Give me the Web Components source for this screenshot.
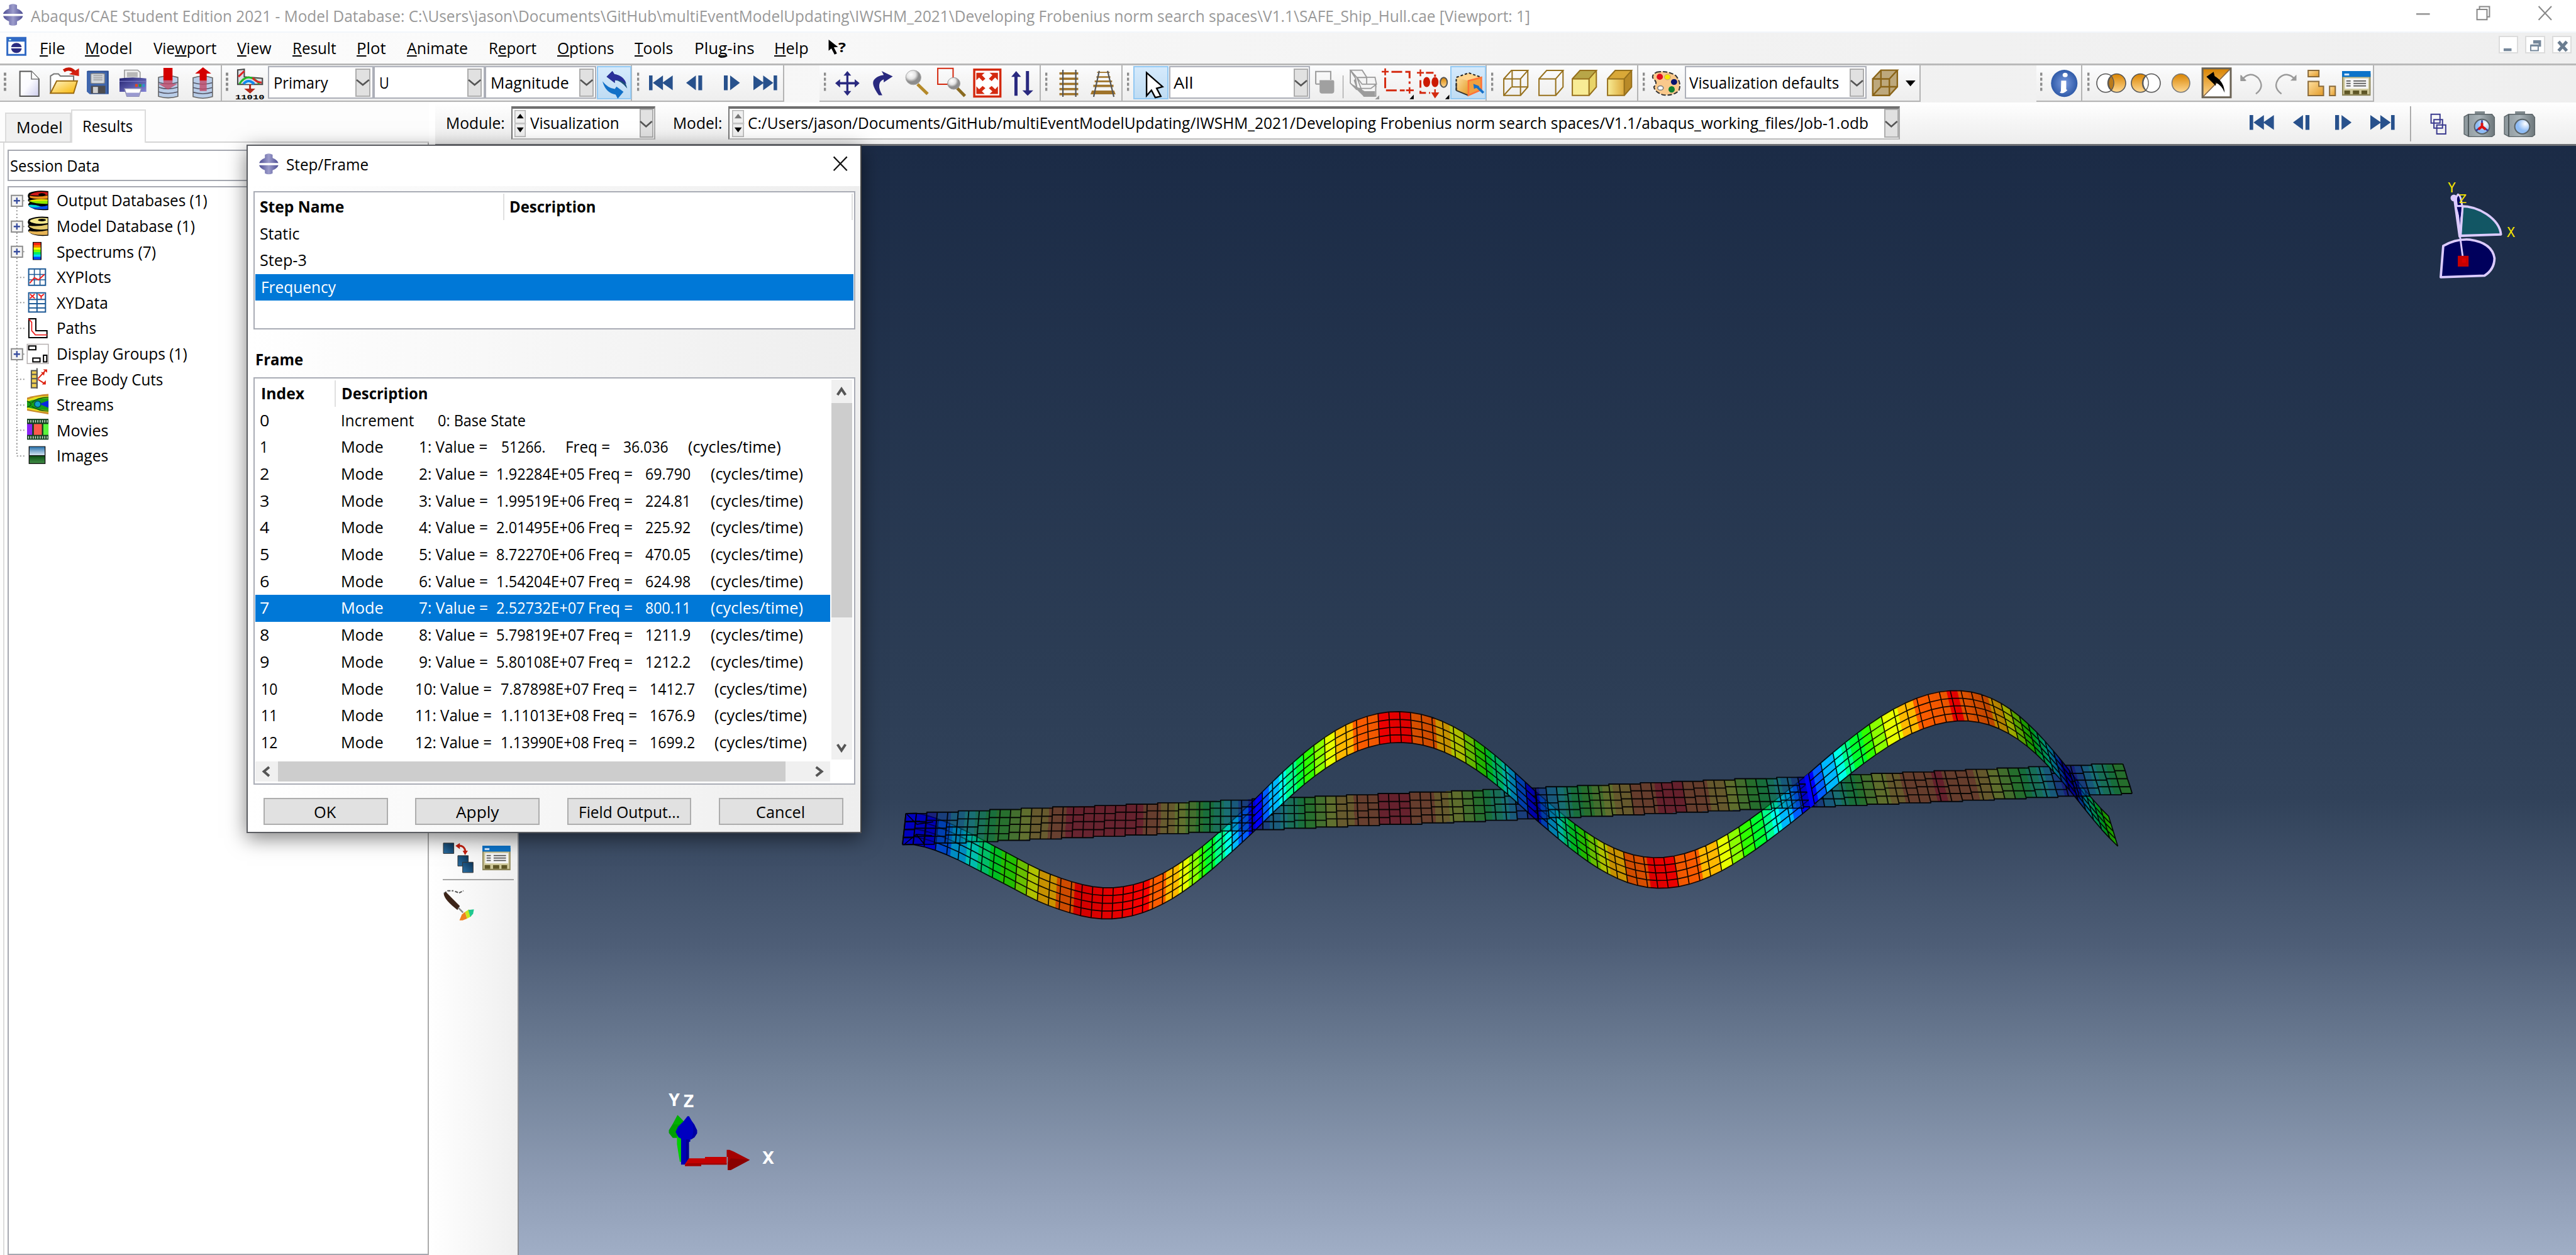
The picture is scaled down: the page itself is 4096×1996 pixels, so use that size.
<!DOCTYPE html>
<html lang="en">
<head>
<meta charset="utf-8">
<title>Abaqus/CAE Student Edition 2021</title>
<style>
html,body{margin:0;padding:0;width:4096px;height:1996px;overflow:hidden;background:#fff;font-family:"Open Sans","Noto Sans",sans-serif;color:#000}
</style>
</head>
<body>
<cae-app></cae-app>
<script>
/* Art grids: each icon is drawn in the grid of its own sheet; the sheet maps it to page pixels. */
const SHEET={
 1:{x:0,y:0,a:.656,b:.2226},2:{x:975.1,y:0,a:.5537,b:.2226},3:{x:1803.3,y:66.8,a:.5537,b:.2226},
 4:{x:2644.9,y:66.8,a:.3834,b:.2226},5:{x:3205.9,y:0,a:.5678,b:.2226},6:{x:0,y:240.4,a:.2641,b:.3322},
 7:{x:387.4,y:227.1,a:.6389,b:.3834},8:{x:387.4,y:801.5,a:.6389,b:.4345}};
const r2=n=>Math.round(n*100)/100;
const svg=(vb,w,h,body)=>`<svg width="${r2(w)}" height="${r2(h)}" viewBox="${vb}" preserveAspectRatio="none">${body}</svg>`;
function I(c,x0,y0,x1,y1,body){const k=SHEET[c];const w=(x1-x0)*k.a,h=(y1-y0)*k.b;
 return{x:k.x+x0*k.a,y:k.y+y0*k.b,w,h,html:svg(`${x0} ${y0} ${x1-x0} ${y1-y0}`,w,h,body)};}
function T(x0,x1,base,text,o={}){const s=o.s||25;
 return{x:x0-1,y:base-1.069*s,w:x1-x0+2,h:1.362*s,html:`<ui-text w="${r2(x1-x0+2)}" style="font-size:${s}px;${o.css||''}">${text}</ui-text>`};}
function TC(c,x0,x1,base,text,o){const k=SHEET[c];return T(k.x+x0*k.a,k.x+x1*k.a,k.y+base*k.b,text,o);}
function row(items,ox,oy){let p=ox;return`<div class="row">`+items.slice().sort((a,b)=>a.x-b.x).map(i=>{
 const s=`<div style="margin-left:${r2(i.x-p)}px;margin-top:${r2(i.y-oy)}px;width:${r2(i.w)}px;height:${r2(i.h)}px">${i.html}</div>`;p=i.x+i.w;return s;}).join('')+`</div>`;}
function box(x,y,w,h,css,items=[]){return{x,y,w,h,html:`<div style="width:100%;height:100%;${css}">${row(items,x,y)}</div>`};}
function boxC(c,x0,y0,x1,y1,css,items){const k=SHEET[c];return box(k.x+x0*k.a,k.y+y0*k.b,(x1-x0)*k.a,(y1-y0)*k.b,css,items);}
const BASE=`<style>:host{display:block;box-sizing:border-box}*{box-sizing:border-box}.row{display:flex;align-items:flex-start}.row>div{flex:none}
svg{display:block;overflow:visible}svg *{vector-effect:non-scaling-stroke}.defs{position:absolute}</style>
<svg class="defs" width="0" height="0"><defs>
<linearGradient id="or" x1="0" y1="0" x2="0" y2="1"><stop offset="0" stop-color="#d98300"/><stop offset="1" stop-color="#ffd993"/></linearGradient>
<linearGradient id="ol" x1="0" y1="0" x2="1" y2="1"><stop offset="0" stop-color="#ffe0a0"/><stop offset="1" stop-color="#e29a28"/></linearGradient>
<linearGradient id="pu" x1="0" x2="1"><stop offset="0" stop-color="#4d4d93"/><stop offset=".5" stop-color="#9c9ccb"/><stop offset="1" stop-color="#4d4d93"/></linearGradient>
<linearGradient id="pr" x1="0" y1="0" x2="1" y2="1"><stop offset="0" stop-color="#22226f"/><stop offset="1" stop-color="#8484d6"/></linearGradient>
<linearGradient id="doc" x1="0" y1="0" x2="1" y2="1"><stop offset="0" stop-color="#fff"/><stop offset=".5" stop-color="#fbfbff"/><stop offset="1" stop-color="#ccccec"/></linearGradient>
<linearGradient id="fo" x1="0" y1="0" x2="1" y2="1"><stop offset="0" stop-color="#fff4c8"/><stop offset="1" stop-color="#f7b500"/></linearGradient>
<radialGradient id="ball" cx=".35" cy=".3"><stop offset="0" stop-color="#fff"/><stop offset=".6" stop-color="#e4e4e4"/><stop offset="1" stop-color="#8d8d8d"/></radialGradient>
<radialGradient id="inf"><stop offset="0" stop-color="#7b9ce0"/><stop offset="1" stop-color="#2f5aa8"/></radialGradient>
<radialGradient id="lens" cx=".7" cy=".3"><stop offset="0" stop-color="#fff"/><stop offset="1" stop-color="#8fbcf5"/></radialGradient>
<linearGradient id="cam" x1="0" x2="1"><stop offset="0" stop-color="#8b969b"/><stop offset=".5" stop-color="#a9b3b8"/><stop offset="1" stop-color="#6c767a"/></linearGradient>
<linearGradient id="bl" x1="0" y1="1" x2="1" y2="0"><stop offset="0" stop-color="#2b70a5"/><stop offset="1" stop-color="#0c3355"/></linearGradient>
<linearGradient id="img" x1="0" y1="0" x2="0" y2="1"><stop offset="0" stop-color="#2a73ad"/><stop offset="1" stop-color="#d5e4f0"/></linearGradient>
<linearGradient id="grn" x1="0" y1="0" x2="0" y2="1"><stop offset="0" stop-color="#0d4f14"/><stop offset="1" stop-color="#3f8c45"/></linearGradient>
<linearGradient id="gold" x1="0" x2="1"><stop offset="0" stop-color="#f8ec95"/><stop offset="1" stop-color="#dda93b"/></linearGradient>
</defs></svg>`;

/* One line of text, condensed horizontally to its advance width. */
class UiText extends HTMLElement{
 constructor(){super();this.attachShadow({mode:'open'}).innerHTML=`<style>:host{display:block;white-space:pre;line-height:1.362}span{display:inline-block;transform-origin:0 50%}</style><span><slot></slot></span>`;}
 connectedCallback(){this.fit();document.fonts.ready.then(()=>this.fit());}
 fit(){const s=this.shadowRoot.querySelector('span');s.style.transform='none';const n=s.offsetWidth?s.getBoundingClientRect().width:0;if(n)s.style.transform=`scaleX(${(+this.getAttribute('w')/n).toFixed(4)})`;}
}
customElements.define('ui-text',UiText);
function define(name,css,render){customElements.define(name,class extends HTMLElement{
 constructor(){super();this.attachShadow({mode:'open'});}
 connectedCallback(){this.shadowRoot.innerHTML=BASE+`<style>${css}</style>`+render(this);}});}

/* ---- shared art ---- */
const logo=(c,x0,y0,x1,y1)=>{const w=x1-x0,h=y1-y0,X=f=>x0+w*f,Y=f=>y0+h*f;
 return I(c,x0,y0,x1,y1,`<path fill="url(#pu)" d="M${X(0)} ${Y(.46)}Q${X(.05)} ${Y(.3)} ${X(.3)} ${Y(.22)}V${Y(.06)}Q${X(.5)} ${Y(-.04)} ${X(.7)} ${Y(.06)}V${Y(.22)}Q${X(.95)} ${Y(.3)} ${X(1)} ${Y(.46)}ZM${X(0)} ${Y(.56)}Q${X(.05)} ${Y(.72)} ${X(.3)} ${Y(.8)}V${Y(.95)}Q${X(.5)} ${Y(1.04)} ${X(.7)} ${Y(.95)}V${Y(.8)}Q${X(.95)} ${Y(.72)} ${X(1)} ${Y(.56)}Z"/>`);};
const grip=(c,x,dy=0)=>I(c,x-3,520-dy,x+3,655-dy,[0,1,2,3].map(i=>`<rect x="${x-3}" y="${518-dy+i*36}" width="6" height="22" fill="#8c8c8c"/>`).join(''));
const B='#28518c';
const play=(c,x0,y0,kind)=>{const w=kind<2?68:46,h=106,m=y0+53,e=y0+h;let p;
 if(kind==0)p=`M${x0} ${y0}h10v${h}h-10zM${x0+40} ${y0}L${x0+11} ${m}L${x0+40} ${e}zM${x0+68} ${y0}L${x0+38} ${m}L${x0+68} ${e}z`;
 if(kind==1)p=`M${x0+58} ${y0}h10v${h}h-10zM${x0+28} ${y0}L${x0+57} ${m}L${x0+28} ${e}zM${x0} ${y0}L${x0+30} ${m}L${x0} ${e}z`;
 if(kind==2)p=`M${x0} ${m}L${x0+28} ${y0}V${e}zM${x0+35} ${y0}h11v${h}h-11z`;
 if(kind==3)p=`M${x0+46} ${m}L${x0+18} ${y0}V${e}zM${x0} ${y0}h11v${h}h-11z`;
 return I(c,x0,y0,x0+w,e,`<path fill="${B}" d="${p}"/>`);};
const arrowDown=(c,x0,x1,y0,y1,extra='')=>{const m=(x0+x1)/2,h=y1-y0,q=(x1-x0)*.42;
 return boxC(c,x0,y0,x1,y1,'background:#e1e1e1;border:2px solid #adadad;'+extra,[I(c,m-q,y0+h*.42,m+q,y0+h*.6,`<path d="M${m-q} ${y0+h*.42}L${m} ${y0+h*.6}L${m+q} ${y0+h*.42}" fill="none" stroke="#555" stroke-width="2.6"/>`)].map(i=>({...i,x:i.x-2,y:i.y-2})));};
const tablet=(c,x0,y0,x1,y1)=>{const w=x1-x0,h=y1-y0,R=(a,b,e,d,f)=>`<rect x="${x0+w*a}" y="${y0+h*b}" width="${w*e}" height="${h*d}" fill="${f}"/>`;
 return I(c,x0,y0,x1,y1,R(0,.1,1,.9,'#8c8457')+R(.04,.24,.92,.7,'#cfc89a')+R(0,0,1,.24,'#0b73c9')+R(.08,.1,.17,.08,'#cfe6ff')+R(.1,.3,.82,.42,'#f6f6f6')
 +[.38,.48,.58].map(y=>R(.15,y,.15,.045,'#555')+R(.4,y,.44,.045,'#555')).join('')+R(.08,.79,.2,.15,'#5e5626')+R(.38,.79,.22,.15,'#5e5626')+R(.68,.79,.2,.15,'#5e5626'));};

define('title-bar',':host{height:50px;background:#fff}',()=>row([
 logo(1,8,25,56,182),
 T(50,2432,34.8,'Abaqus/CAE Student Edition 2021 - Model Database: C:\\Users\\jason\\Documents\\GitHub\\multiEventModelUpdating\\IWSHM_2021\\Developing Frobenius norm search spaces\\V1.1\\SAFE_Ship_Hull.cae [Viewport: 1]',{css:'color:#999'}),
 I(5,1120,94,1158,106,`<rect x="1120" y="94" width="38" height="12" fill="#999"/>`),
 I(5,1290,47,1327,145,`<path fill="none" stroke="#888" stroke-width="2" d="M1291 69H1319V143H1291ZM1298 68V49H1326V122H1320"/>`),
 I(5,1462,47,1500,145,`<path fill="none" stroke="#888" stroke-width="2" d="M1463 47L1499 145M1499 47L1463 145"/>`)
],0,0));

define('menu-bar',':host{height:51px;background:linear-gradient(90deg,#fdfdfd,#f2f2f2 65%,#efefef);border-top:2px solid #f2f6fb}u{text-decoration-thickness:2.2px;text-underline-offset:2.4px;text-decoration-skip-ink:none}',()=>{
 const m=(c,a,b,t)=>TC(c,a,b,383,t);
 const mdi=(x,body)=>boxC(5,x,258,x+55,382,'background:#fff;border:2px solid #dcdcdc',[I(5,x+8,270,x+50,370,body)].map(i=>({...i,x:i.x-2,y:i.y-2})));
 return row([
 I(1,16,268,62,392,`<rect x="17" y="269" width="44" height="122" fill="#fff" stroke="#316ac5" stroke-width="3"/><rect x="16" y="268" width="46" height="28" fill="#316ac5"/><rect x="21" y="277" width="5" height="10" fill="#cfe"/><ellipse cx="39" cy="341" rx="13" ry="36" fill="#2b2b80"/><rect x="24" y="335" width="30" height="9" fill="#fff"/>`),
 m(1,98,157,'<u>F</u>ile'),m(1,208,320,'<u>M</u>odel'),m(1,373,523,'Vie<u>w</u>port'),m(1,577,657,'<u>V</u>iew'),m(1,711,814,'<u>R</u>esult'),m(1,866,934,'<u>P</u>lot'),m(1,988,1133,'<u>A</u>nimate'),m(1,1186,1299,'R<u>e</u>port'),m(1,1352,1487,'<u>O</u>ptions'),
 m(2,64,171,'<u>T</u>ools'),m(2,234,403,'Plu<u>g</u>-ins'),m(2,465,560,'<u>H</u>elp'),
 I(2,618,285,642,395,`<path d="M619 285V365L627 348L636 392L643 384L634 340L646 338Z" fill="#000"/>`),
 TC(2,648,666,375,'?',{s:22,css:'font-weight:bold'}),
 mdi(1351,`<rect x="1366" y="346" width="22" height="20" fill="#75879a"/>`),
 mdi(1426,`<path d="M1448 288h22v46h-7v-22h-15z" fill="#75879a"/><rect x="1441" y="326" width="21" height="36" fill="#fff" stroke="#75879a" stroke-width="2"/><rect x="1440" y="318" width="23" height="14" fill="#75879a"/>`),
 mdi(1501,`<path d="M1520 298L1543 364M1543 298L1520 364" stroke="#6b7d90" stroke-width="5"/>`)
 ],0,52);});

define('tool-strip',':host{height:62px;background:linear-gradient(90deg,#fbfbfb,#f2f2f2 65%,#efefef);border-top:3px solid #b9b9b9}.row{height:100%}',()=>{
 const Y=104,G='background:linear-gradient(#fcfdff,#f7f7f7 30%,#eee);border-right:2px solid #b4b4b4;border-bottom:2px solid #b4b4b4';
 const grp=(x0,x1,items)=>box(x0,Y,x1-x0,58,G,items);
 const hot='background:linear-gradient(#d5eafc,#bfdcf3);border:2px solid #93c9f3';
 const D=100*3; // sheets 3 and 4 start lower on the page
 const combo=(c,x0,x1,bx0,bx1,t0,t1,txt,dy=0)=>{const it=boxC(c,x0,472-dy,x1,706-dy,'background:#fff;box-shadow:inset 0 0 0 2px #acafb8',[TC(c,t0,t1,632-dy,txt),arrowDown(c,bx0,bx1,488-dy,690-dy)]);return it;};
 const db=(x,up)=>`<path d="M${x} 555V690Q${x+24} 712 ${x+47} 690V555Q${x+24} 533 ${x} 555Z" fill="#b9cde8" stroke="#666" stroke-width="1.6"/><path d="M${x} 590Q${x+24} 612 ${x+47} 590M${x} 625Q${x+24} 647 ${x+47} 625M${x} 658Q${x+24} 680 ${x+47} 658" fill="none" stroke="#556" stroke-width="1.6"/>`
  +(up?`<path d="M${x+16} 575V525H${x+5}L${x+24} 480L${x+44} 525H${x+33}V575Z" fill="#d40000"/><path d="M${x+16} 575h17v75h-17z" fill="#c04a68" opacity=".8"/>`
  :`<path d="M${x+12} 487h22v90h-22z" fill="#d40000"/><path d="M${x+12} 575h22v25h12L${x+23} 642L${x} 600h12z" fill="#c04a68" opacity=".8"/>`);
 const cube=(x,body)=>I(3,x,197,x+73,383,body);
 const cy=(x,f1,f2,f3)=>`<path d="M${x+2} 262L${x+24} 202H${x+71}L${x+50} 262Z" fill="${f2}"/><path d="M${x+50} 262L${x+71} 202V320L${x+50} 380Z" fill="${f3}"/><path d="M${x+2} 262h48v118h-48z" fill="${f1}"/>`;
 const ol=x=>`<path d="M${x+2} 262h48v118h-48zL${x+24} 202H${x+71}L${x+50} 262M${x+71} 202V320L${x+50} 380" fill="none" stroke="#96701c" stroke-width="2"/>`;
 const vw=`<path d="M26 202V320H71M24 320L2 380" fill="none" stroke="#96701c" stroke-width="2"/>`;
 const circ=(x,a,b)=>`<ellipse cx="${x+24}" cy="595" rx="25" ry="66" fill="${a}" stroke="#555" stroke-width="1.6"/><ellipse cx="${x+55}" cy="595" rx="25" ry="66" fill="${b}" stroke="#555" stroke-width="1.6"/><path d="M${x+40} 543Q${x+54} 595 ${x+40} 647Q${x+24} 595 ${x+40} 543Z" fill="${a=='#fff'?'#b97a1c':'#fff'}" stroke="#555" stroke-width="1.2"/>`;
 const red='#d42a10';
 return row([
 grp(0,352.6,[grip(1,12),
  I(1,47,508,95,690,`<path d="M48 510H76L94 565V688H48Z" fill="url(#doc)" stroke="#555" stroke-width="2"/><path d="M76 510V565H94" fill="#fff" stroke="#777" stroke-width="1.6"/>`),
  I(1,120,487,192,672,`<path d="M122 668V545L130 530H141L146 545H178V580" fill="#fff" stroke="#777" stroke-width="2"/><path d="M122 668L137 580H187L178 668Z" fill="url(#fo)" stroke="#9a6a10" stroke-width="2"/><path d="M154 508Q168 480 180 515" fill="none" stroke="#c81808" stroke-width="5"/><path d="M191 490V545L167 532Z" fill="#d42010"/>`),
  I(1,211,507,264,672,`<path d="M211 507h53v165h-46l-7-18z" fill="#3f66ad"/><path d="M213 509h49v160" fill="none" stroke="#2b4b8c" stroke-width="2"/><rect x="221" y="525" width="33" height="70" rx="5" fill="#d3d7dc" stroke="#888" stroke-width="1.4"/><path d="M227 540h22M227 555h22M227 570h22" stroke="#aaa" stroke-width="2"/><rect x="221" y="612" width="35" height="56" fill="#4c4c50"/><rect x="226" y="620" width="12" height="44" fill="#d0d0d0"/>`),
  I(1,290,498,355,690,`<path d="M302 560V500H334L340 515V560Z" fill="#f0f0f0" stroke="#999" stroke-width="1.6"/><rect x="308" y="515" width="26" height="35" fill="#b8b8b8"/><path d="M290 560Q322 545 355 560V655H290Z" fill="url(#pr)"/><rect x="290" y="578" width="65" height="5" fill="#7b7bc6"/><rect x="328" y="600" width="6" height="20" fill="#e04a20"/><rect x="337" y="600" width="6" height="20" fill="#20a040"/><rect x="346" y="600" width="5" height="20" fill="#29c"/><path d="M302 632H343L337 688H308Z" fill="#fff" stroke="#8888b0" stroke-width="1.4"/><path d="M306 662H339L336 688H309Z" fill="#9a9ad0"/>`),
  I(1,384,487,431,700,db(384)),I(1,468,480,516,700,db(468,1))]),
 grp(352.6,1005.5,[grip(1,550),
  I(1,570,490,642,712,`<path d="M576 500L592 495V550L636 560V603H576Z" fill="#d9dde2" stroke="#444" stroke-width="2"/><path d="M578 548L592 508" stroke="#d22" stroke-width="3"/><path d="M580 600Q590 555 603 553Q620 560 628 600" fill="none" stroke="#2b2" stroke-width="3"/><path d="M590 600Q602 560 616 600" fill="#dff" stroke="#18e" stroke-width="4"/><path d="M612 556Q622 590 634 590" stroke="#d22" stroke-width="3" fill="none"/><path d="M606 603V645M598 640H613L606 660Z" stroke="#b02a1a" fill="#b02a1a" stroke-width="3"/><text x="570" y="709" textLength="71" lengthAdjust="spacingAndGlyphs" font-size="48" font-weight="bold" font-family="Liberation Mono">11010</text>`),
  combo(1,650,905,862,898,664,793,'Primary'),combo(1,905,1176,1133,1168,921,942,'U'),combo(1,1176,1445,1404,1439,1190,1377,'Magnitude'),
  boxC(1,1447,472,1530,710,hot,[I(1,1457,507,1524,705,`<path d="M1470 548L1484 507L1489 530Q1512 540 1520 632Q1505 575 1490 572V592Z" fill="url(#bl)"/><path d="M1511 655L1497 705L1492 675Q1468 665 1460 580Q1474 632 1490 635L1494 618Z" fill="#1171c8"/><path d="M1470 548L1484 507L1489 530Q1512 540 1518 600Q1505 565 1490 572V592Z" fill="#2a2f9a"/>`)].map(i=>({...i,x:i.x-2,y:i.y-2})))]),
 grp(1005.5,1247,[grip(2,71),play(2,102,537,0),play(2,210,537,2),play(2,318,537,3),play(2,403,537,1)]),
 grp(1303,1655,[grip(2,607),
  I(2,638,507,708,683,`<path d="M673 507L684 540H676V586H694V565L708 594L694 625V602H676V650H684L673 683L662 650H670V602H652V625L638 594L652 565V586H670V540H662Z" fill="#29297f"/>`),
  I(2,745,507,802,683,`<path d="M770 507L802 545L776 588V566Q752 590 772 680H762Q735 590 752 560Q760 540 776 535Z" fill="#29297f"/>`),
  I(2,838,497,905,672,`<path d="M874 600L903 670" stroke="#b58a2a" stroke-width="5"/><ellipse cx="862" cy="552" rx="22" ry="52" fill="url(#ball)" stroke="#aaa" stroke-width="1"/>`),
  I(2,930,487,1012,690,`<rect x="932" y="490" width="44" height="114" fill="none" stroke="${red}" stroke-width="2"/><path d="M988 632L1010 688" stroke="#8a6a20" stroke-width="5"/><ellipse cx="978" cy="598" rx="18" ry="42" fill="url(#ball)" stroke="#999" stroke-width="1"/>`),
  I(2,1034,492,1112,690,`<rect x="1036" y="495" width="75" height="193" fill="#fff" stroke="${red}" stroke-width="3.5"/><path d="M1042 518H1066L1058 535L1068 560L1060 577L1050 552L1042 572ZM1104 518H1080L1088 535L1078 560L1086 577L1096 552L1104 572ZM1042 670H1066L1058 650L1068 628L1060 612L1050 636L1042 614ZM1104 670H1080L1088 650L1078 628L1086 612L1096 636L1104 614Z" fill="${red}"/>`),
  I(2,1143,507,1206,683,`<path d="M1157 507L1171 548H1161V683H1152V548H1143ZM1190 683L1175 645H1185V507H1194V645H1206Z" fill="#29297f"/>`)]),
 grp(1655,1785,[grip(2,1243),
  I(2,1280,497,1336,690,`<g fill="#a0742a">${[515,553,590,627,663].map(y=>`<rect x="1281" y="${y}" width="54" height="16"/>`).join('')}</g><path d="M1291 497V690M1328 497V690" stroke="#555" stroke-width="2.2"/>`),
  I(2,1371,497,1443,690,`<g fill="#a0742a"><path d="M1390 512h36v8h-36zM1388 543h40v11h-40zM1383 573h50v13h-50zM1379 604h58v17h-58zM1375 645h64l4 27h-72z"/></g><path d="M1396 505L1380 690M1420 505L1438 690" stroke="#555" stroke-width="2.2"/>`)]),
 grp(1785,2364,[grip(2,1478),
  box(1802.3,105.1,56,52.5,hot,[I(3,33,217,83,400,`<path d="M35 220V385L49 345L60 397L76 388L64 332L81 320Z" fill="#fff" stroke="#000" stroke-width="2.4"/>`)].map(i=>({...i,x:i.x-2,y:i.y-2}))),
  combo(3,100,506,458,499,115,168,'All',D),
  I(3,519,207,575,398,`<path d="M521 300V210H564V270" fill="none" stroke="#9a9a9a" stroke-width="2"/><path d="M521 300h12" stroke="#9a9a9a" stroke-width="2"/><path d="M532 272h38q4 0 4 12V350q0 15-6 18H538q-6-3-6-18Z" fill="#a0a0a0"/>`),
  I(3,600,237,602,400,`<rect x="600" y="237" width="2" height="163" fill="#999"/>`),
  I(3,619,197,704,408,`<path d="M621 292L660 388H692L696 310L668 252H640Z" fill="#9c9c9c"/><path d="M621 200H655L668 250H692L696 300L680 330H640L636 258ZM621 200L621 292L640 340M668 252V300M640 252L655 300H694V385H660ZM621 200L640 252H668" fill="#f4f4f4" stroke="#9a9a9a" stroke-width="1.8"/><path d="M621 292L660 388H692V350L662 350Z" fill="#9c9c9c"/><path d="M704 380V408H692Z" fill="#999"/>`),
  I(3,712,187,804,410,`<path d="M740 215H792V300M722 255V348H778" fill="none" stroke="${red}" stroke-width="3" stroke-dasharray="17 5"/><path d="M722 190V240M712 214H732M792 325V370M782 347H804" stroke="${red}" stroke-width="2.6"/><path d="M804 378V410H792Z" fill="#000"/>`),
  I(3,812,187,905,410,`<path d="M838 222H864V250M822 275V366H850" fill="none" stroke="${red}" stroke-width="3" stroke-dasharray="12 5"/><path d="M822 198V246M812 222H832M864 340V385M857 368H872L864 395Z" stroke="${red}" fill="${red}" stroke-width="2.4"/><ellipse cx="840" cy="288" rx="10" ry="36" fill="#cc1b04"/><ellipse cx="864" cy="288" rx="10" ry="36" fill="#cc1b04"/><ellipse cx="889" cy="290" rx="10" ry="35" fill="url(#or)" stroke="#555" stroke-width="2"/><path d="M905 378V410H893Z" fill="#000"/>`),
  boxC(3,909,172,1011,408,hot,[I(3,925,220,1005,383,`<path d="M926 252L962 220L999 252L960 275Z" fill="#ffd48c"/><path d="M926 252L960 275V380L926 345Z" fill="url(#ol)"/><path d="M999 252L960 275V380L999 345Z" fill="#f0a040"/><path d="M926 345V252L962 220L999 252" fill="none" stroke="#222" stroke-width="2" stroke-dasharray="4 3"/><path d="M926 345L960 380M926 345V290" stroke="#333" stroke-width="2"/><path d="M961 380V276L998 252V340Z" fill="none" stroke="#ff7338" stroke-width="2.6"/><path d="M1004 362L984 315" stroke="#1670c8" stroke-width="4"/><path d="M975 298L993 315L977 335Z" fill="#1670c8"/>`)].map(i=>({...i,x:i.x-2,y:i.y-2})))]),
 grp(2364,2605.5,[grip(3,1028,D),
  cube(1060,cy(1060,'none','none','none')+ol(1060)+`<g transform="translate(1060 0)">${vw}</g>`),
  cube(1160,cy(1160,'none','none','none')+ol(1160)),
  cube(1257,cy(1257,'#f8ec95','#b8a648','#e8d468')+ol(1257)),
  cube(1357,cy(1357,'url(#gold)','#d9a838','#b98a28')+ol(1357))]),
 grp(2605.5,3054,[grip(3,1464,D),
  I(3,1487,207,1570,383,`<path d="M1500 215Q1530 200 1555 240Q1572 290 1564 345Q1550 385 1520 378Q1495 360 1492 320Q1505 290 1490 262Q1484 235 1500 215Z" fill="#fac98c" stroke="#333" stroke-width="2" stroke-dasharray="7 3"/><ellipse cx="1509" cy="248" rx="9" ry="22" fill="#e3101c"/><ellipse cx="1531" cy="250" rx="9" ry="20" fill="#f5e800" stroke="#c98" stroke-width="1"/><ellipse cx="1550" cy="285" rx="9" ry="21" fill="#08146e"/><ellipse cx="1543" cy="338" rx="9" ry="23" fill="#108030"/><ellipse cx="1511" cy="328" rx="8" ry="15" fill="#fff" stroke="#777" stroke-width="1.5"/>`),
  combo(4,88,843,773,832,110,726,'Visualization defaults',D),
  I(4,867,197,972,383,`<path d="M869 262L903 200H971V318L938 380H869Z" fill="#bda87c"/><path d="M869 262h69v118h-69zL903 200H971L938 262M971 200V318L938 380M903 200V318H971M903 318L869 380" fill="none" stroke="#8a6418" stroke-width="2.4"/>`),
  I(4,1005,275,1046,316,`<path d="M1005 275H1046L1025 316Z" fill="#000"/>`)]),
 grp(3238,3311.5,[grip(5,70),
  I(5,97,497,172,692,`<ellipse cx="134.500" cy="594" rx="37" ry="97" fill="url(#inf)"/><ellipse cx="137" cy="534" rx="7" ry="16" fill="#fff"/><path d="M126 575H140V640L133 660L125 655Z" fill="#fff"/><path d="M123 655Q130 670 142 640" stroke="#fff" stroke-width="2" fill="none"/>`)]),
 grp(3311.5,3775.5,[grip(5,203),I(5,226,527,308,662,circ(227,'#fff','url(#or)')),I(5,323,527,405,662,circ(324,'url(#or)','#fff')),
  I(5,436,527,488,662,`<ellipse cx="462" cy="595" rx="25" ry="66" fill="url(#or)" stroke="#777" stroke-width="1.6"/>`),
  I(5,519,487,601,700,`<rect x="520" y="490" width="80" height="207" fill="#fff"/><path d="M521 491H600L521 697Z" fill="url(#or)"/><path d="M600 491L521 697" stroke="#864" stroke-width="1.6"/><rect x="521" y="490" width="79" height="207" fill="none" stroke="#6b6355" stroke-width="3"/><path d="M532 550L552 515L555 545Q582 585 583 665Q575 612 558 592V615Z" fill="#000"/>`),
  I(5,627,527,688,678,`<path d="M630 540V575H642M632 570Q655 505 678 560Q697 625 671 672" fill="none" stroke="#9a9a9a" stroke-width="2.4"/><path d="M628 535V577H645Z" fill="#999"/>`),
  I(5,726,527,787,678,`<path d="M782 570Q758 505 736 560Q717 625 743 672" fill="none" stroke="#9a9a9a" stroke-width="2.4"/><path d="M785 535V577H768Z" fill="#999"/>`),
  I(5,815,497,895,683,`<g fill="url(#ol)" stroke="#8a6a3a" stroke-width="2"><rect x="817" y="501" width="30" height="45"/><path d="M817 580H847V615H860V681H817Z"/><rect x="877" y="615" width="16" height="66"/></g>`),
  tablet(5,913,507,993,683)])
 ],0,Y);});

define('context-bar',':host{height:69px;flex:1;background:linear-gradient(#fff,#f6f6f6 45%,#ededed);border-bottom:3px solid #6d6f74}',()=>{
 const spin=(c,x0,x1,dim)=>boxC(c,x0,785,x1,978,'background:#f0f0f0;box-shadow:inset 0 0 0 1.500px #b4b4b4',[I(c,x0,785,x1,978,`<path d="M${x0+(x1-x0)*.2} 845H${x0+(x1-x0)*.8}L${(x0+x1)/2} 812Z" fill="${dim?'#777':'#000'}"/><path d="M${x0} 875h${x1-x0}v12h-${x1-x0}z" fill="#c4c4c4"/><path d="M${x0+(x1-x0)*.2} 910H${x0+(x1-x0)*.8}L${(x0+x1)/2} 945Z"/>`)]);
 const F='background:#fff;border-top:4px solid #6f6f6f;border-left:2px solid #777;border-bottom:2px solid #bdbdbd;border-right:2px solid #aaa';
 const off=a=>a.map(i=>({...i,x:i.x-2,y:i.y-4}));
 const cam=(x,b)=>I(5,x,792,x+89,980,`<path d="M${x+32} 825V797H${x+60}V825Z" fill="#7e888c"/><path d="M${x+2} 835L${x+14} 818H${x+80}L${x+87} 840V965L${x+80} 978H${x+15}L${x+2} 960Z" fill="url(#cam)" stroke="#5b6468" stroke-width="1.4"/><path d="M${x+14} 820V975" stroke="#50595d" stroke-width="2"/><ellipse cx="${x+52}" cy="906" rx="21" ry="52" fill="url(#lens)" stroke="#596266" stroke-width="2"/>${b}`);
 return row([
 TC(1,1082,1222,920,'Module:'),
 box(813.4,169,228.5,52.5,F,off([spin(1,1247,1275),TC(1,1287,1500,920,'Visualization'),arrowDown(2,75,115,778,985)])),
 TC(2,174,312,920,'Model:'),
 box(1158.4,169,1863,52.5,F,off([spin(2,341,376,1),T(1190,2970,204.8,'C:/Users/jason/Documents/GitHub/multiEventModelUpdating/IWSHM_2021/Developing Frobenius norm search spaces/V1.1/abaqus_working_files/Job-1.odb'),arrowDown(4,917,975,478,685)])),
 play(5,653,824,0),play(5,775,824,2),play(5,893,824,3),play(5,992,824,1),
 I(5,1103,757,1106,1008,`<rect x="1103" y="757" width="3" height="251" fill="#a0a0a0"/>`),
 I(5,1161,814,1204,960,`<g fill="none" stroke="#3b3b8f" stroke-width="2"><rect x="1162" y="817" width="25" height="63"/><rect x="1170" y="856" width="24" height="60"/><rect x="1178" y="894" width="25" height="64"/></g>`),
 cam(1253,`<path d="M1305 860V905L1288 935M1305 905L1322 935" stroke="#3a3a9a" stroke-width="2.600" fill="none"/><path d="M1305 905L1295 925M1305 905L1315 925M1305 880V915" stroke="#d11" stroke-width="4"/>`),cam(1366,'')
 ],692,163);});

define('tree-row',':host{height:40.600px}',el=>{
 const i=+el.getAttribute('n'),c=238+122.2*i,exp=el.hasAttribute('exp');
 const art=[
 `<path d="M290 192V282Q200 288 172 262L168 255L178 245Q160 237 172 228Q160 212 175 200Q220 184 290 192Z" fill="#000"/><path d="M178 210Q210 190 286 197V210Q215 216 178 210Z" fill="#d01818"/><path d="M178 214Q230 222 286 212V228Q200 232 178 222Z" fill="#f09020"/><ellipse cx="252" cy="208" rx="22" ry="6"/><path d="M174 240Q205 230 286 234V254Q205 252 174 240Z" fill="#8ae800"/><path d="M174 238Q220 226 286 231V238Q220 240 174 240Z" fill="#f4e000"/><path d="M174 258Q200 254 240 264Q262 268 286 260V278Q200 282 174 266Z" fill="#0a50f0"/><path d="M174 258Q210 256 244 266Q205 274 174 264Z" fill="#00d8c8"/>`,
 `<path d="M290 314V404Q200 410 172 386L168 379L178 369Q160 361 172 352Q160 336 175 324Q220 308 290 314Z" fill="#000"/><path d="M176 334Q205 314 286 320V344Q205 354 176 334Z" fill="#f4e88c"/><ellipse cx="252" cy="329" rx="24" ry="6"/><path d="M175 356Q230 362 286 350V373Q200 380 175 360Z" fill="#e4cb6c"/><path d="M174 381Q230 388 286 378V400Q200 404 174 388Z" fill="#e6b455"/>`,
 `<rect x="196" y="436" width="53" height="86" fill="#000"/>${['#f21','#f70','#ff0','#7f0','#0e6','#0df','#04f'].map((f,k)=>`<rect x="201" y="${439+k*11.4}" width="43" height="12" fill="${f}"/>`).join('')}`,
 `<rect x="172" y="564" width="101" height="78" fill="#fff" stroke="#1d5a96" stroke-width="2"/><path d="M206 564V642M240 564V642M172 590H273M172 616H273" stroke="#1d5a96" stroke-width="1.6"/><path d="M178 632L206 606L232 616L266 590" fill="none" stroke="#e22" stroke-width="2"/>`,
 `<rect x="172" y="680" width="101" height="92" fill="#fff" stroke="#1d5a96" stroke-width="2"/><path d="M222 680V772M172 712H273M172 732H273M172 752H273" stroke="#1d5a96" stroke-width="2"/><path d="M180 686L208 706M208 686L180 706M230 686L247 697L264 686M247 697V708" stroke="#e22" stroke-width="2" fill="none"/>`,
 `<path d="M173 803H215V860H282V893H173Z" fill="#fff" stroke="#000" stroke-width="2"/><path d="M172 803L190 820V860L212 880H283" fill="none" stroke="#e22" stroke-width="1.8"/>`,
 `<rect x="163" y="924" width="127" height="92" fill="#fff" stroke="#b5b0b0" stroke-width="1.500"/><g fill="#fff" stroke="#000" stroke-width="2"><rect x="172" y="932" width="43" height="18"/><rect x="197" y="990" width="43" height="18"/><rect x="261" y="976" width="20" height="32"/></g>`,
 `<path d="M188 1052H222V1134H188Z" fill="#f0d050" stroke="#555" stroke-width="2"/><path d="M188 1070H222M188 1090H222M188 1112H222" stroke="#555" stroke-width="2"/><path d="M222 1040V1138" stroke="#555" stroke-width="2"/><path d="M228 1090L270 1054M228 1094L264 1112" stroke="#d21" stroke-width="2"/><path d="M258 1046H283V1062ZM252 1118H275V1098ZM245 1058L268 1062L264 1076Z" fill="#d21"/>`,
 `<path d="M162 1180Q220 1166 291 1162V1260Q230 1252 162 1242Z" fill="#c98a2c"/><path d="M162 1190Q220 1170 291 1172V1250Q220 1245 162 1234Z" fill="#e8e020"/><path d="M162 1200Q220 1182 291 1182V1240Q220 1238 162 1226Z" fill="#18a018"/><path d="M235 1210L291 1194V1228Z" fill="#0828e0"/><path d="M162 1196Q210 1212 162 1226M291 1178Q220 1180 190 1204M291 1244Q230 1244 190 1222" stroke="#151" stroke-width="1.500" fill="none"/><ellipse cx="226" cy="1211" rx="19" ry="15" fill="#10a0c8" stroke="#046" stroke-width="1.400"/>`,
 `<rect x="162" y="1283" width="129" height="100" fill="#12401f"/><rect x="162" y="1308" width="31" height="52" fill="#8a24f4"/><rect x="203" y="1308" width="48" height="52" fill="#fa5a4c"/><rect x="260" y="1308" width="31" height="52" fill="#5af43c"/>${Array.from({length:9},(_,k)=>`<rect x="${168+k*14}" y="1289" width="6" height="12" fill="#cfe0d0"/><rect x="${168+k*14}" y="1366" width="6" height="12" fill="#cfe0d0"/>`).join('')}`,
 `<rect x="172" y="1413" width="101" height="85" fill="#111"/><rect x="177" y="1416" width="91" height="40" fill="url(#img)"/><rect x="177" y="1460" width="91" height="34" fill="url(#grn)"/>`][i];
 const top=240.4+(c-61.1)*.3322;
 const C=`stroke="#999" stroke-width="2" stroke-dasharray="2 3"`;
 return row([
  I(6,60,c-61.1,150,c+61.1,`<path ${C} d="M101 ${i==0?c:c-61}V${i==10?c:c+61}M101 ${c}H146"/>`+(exp?`<rect x="68" y="${c-26}" width="67" height="52" fill="#f4f4f4" stroke="#8d8d8d" stroke-width="2"/><path d="M82 ${c}H120M101 ${c-15}V${c+15}" stroke="#3a4fa0" stroke-width="2.400"/>`:'')),
  I(6,162,c-61.1,292,c+61.1,art),
  T(90.6,+el.getAttribute('end'),top+29.2,el.getAttribute('label'))
 ],14,top);});

define('side-panel',`:host{display:flex;flex-direction:column;height:1834px;width:682px;background:#fdfdfd}
.tabs{height:64px;display:flex;align-items:flex-end;padding-left:8px;border-bottom:2px solid #d4d4d4}
.tab{background:#f0f0f0;border:2px solid #dcdcdc;border-bottom:0}.tab.on{background:#fff;margin-bottom:-2px}
.page{flex:1;margin-left:5px;padding:11px 0 0 5px;border-left:2px solid #dcdcdc;border-right:2px solid #aaa;background:#fff}
.sel{height:50px;border:2px solid #a5a8b0;border-right:0;background:#fff}
.tree{height:1700px;margin-top:8px;border:2px solid #a5a8b0;border-right:0;padding-top:1px;background:#fff}`,()=>{
 const L=[['Output Databases (1)',328.3,1],['Model Database (1)',308.5,1],['Spectrums (7)',246.7,1],['XYPlots',175.4],['XYData',170.4],['Paths',151.6],['Display Groups (1)',296.3,1],['Free Body Cuts',258],['Streams',179.3],['Movies',171.1],['Images',170.9]];
 return`<div class="tabs"><div class="tab" style="width:105px;height:46px">${row([T(26.9,98.4,213,'Model')],10,182)}</div><div class="tab on" style="width:119px;height:53px">${row([T(131.9,210,211,'Results')],115,177)}</div></div>
 <div class="page"><div class="sel">${row([T(17.2,157.7,273,'Session Data')],14,240)}</div><div class="tree">${L.map((l,i)=>`<tree-row n="${i}" label="${l[0]}" end="${l[1]}" ${l[2]?'exp':''}></tree-row>`).join('')}</div></div>`;});

define('tool-box',':host{width:143px;height:1765px;background:linear-gradient(90deg,#fff,#efefef);border-right:2px solid #8c8f96}.a{padding-top:1106px;border:0;height:1166px}hr{margin:0 6px 0 22px;border:0;border-top:2px solid #a5a5a5}',()=>{
 return`<div class="a">${row([
 I(8,497,1240,571,1350,`<rect x="497" y="1242" width="26" height="38" fill="url(#bl)" stroke="#333" stroke-width="1"/><path d="M532 1252Q550 1248 552 1275" fill="none" stroke="#c52010" stroke-width="3"/><path d="M527 1252L538 1242V1264ZM545 1270H558L551 1286Z" fill="#c52010"/><rect x="533" y="1288" width="26" height="38" fill="url(#bl)" stroke="#333" stroke-width="1"/><rect x="545" y="1312" width="26" height="38" fill="url(#bl)" stroke="#333" stroke-width="1"/>`),
 tablet(8,594,1250,664,1340)],682,1338)}</div><hr>${row([
 I(8,497,1412,574,1528,`<path d="M498 1426L508 1416H522M526 1418L536 1424L547 1416" fill="none" stroke="#555" stroke-width="2" stroke-dasharray="5 2"/><path d="M498 1428L503 1420L538 1472L532 1486Q500 1450 498 1428Z" fill="#3c2418"/><path d="M534 1478L546 1496" stroke="#888" stroke-width="2.500"/><path d="M537 1524L543 1503L551 1493L556 1518L545 1524Z" fill="#f08020"/><path d="M551 1493L561 1484L566 1510L556 1518Z" fill="#c8e820"/><path d="M559 1486L573 1484L571 1500L564 1512Z" fill="#20c890"/>`)],682,1400)}`;});

/* Viewport: undeformed plate, deformed mode shape, triad and view compass. */
define('view-port',':host{flex:1;height:1765px}svg{width:3271px;height:1765px}svg *{vector-effect:none}',()=>{
 const N=116,R=['0,0,255','0,93,255','0,185,255','0,255,232','0,255,139','0,255,46','46,255,0','139,255,0','232,255,0','255,185,0','255,93,0','255,0,0'].map(s=>s.split(',').map(Number));
 const K=[[0,0],[.012,.01],[.037,.16],[.0756,.5],[.107,.77],[.139,.95],[.163,1]];
 const shape=s=>{ // [deflection px, colour magnitude]
  if(s<.163){let i=0;while(i<5&&s>K[i+1][0])i++;
   const h=K[i+1][0]-K[i][0],t=(s-K[i][0])/h,d=j=>j<=0||j>=6?0:(K[j+1][1]-K[j-1][1])/(K[j+1][0]-K[j-1][0]);
   const v=(2*t**3-3*t*t+1)*K[i][1]+(t**3-2*t*t+t)*h*d(i)+(3*t*t-2*t**3)*K[i+1][1]+(t**3-t*t)*h*d(i+1);const q=Math.max(0,v);return[131*q,q];}
  if(s<.287){const v=Math.cos(Math.PI/2*(s-.163)/.124);return[131*v,v];}
  if(s<.514){const v=Math.sin(Math.PI*(s-.287)/.227);return[-130*v,.93*v];}
  if(s<.739){const v=Math.sin(Math.PI*(s-.514)/.225);return[120*v,.93*v];}
  const v=Math.sin(Math.PI*(s-.739)/.214);return[(v<0?-132:-128)*v,Math.abs(.919*v)];};
 const A=[1440.4,1292.9],Bt=[1435,1342.7],E=[3375.5,1213.1],F=[3390.2,1261];
 const flat=(s,t)=>{const x=(1-t)*(A[0]+(E[0]-A[0])*s)+t*(Bt[0]+(F[0]-Bt[0])*s),y=(1-t)*(A[1]+(E[1]-A[1])*s)+t*(Bt[1]+(F[1]-Bt[1])*s);return[x,y];};
 const snap=(s,t)=>{const p=flat(s,t);return[p[0],Math.round(p[1]/2.13)*2.13];};
 const def=(s,t)=>{const p=flat(s,t),w=shape(s)[0];return[p[0]+w*(.17-.44*s),p[1]+w];};
 const P=p=>p[0].toFixed(1)+' '+p[1].toFixed(1);
 const col=(s,k)=>{const c=R[Math.max(0,Math.min(11,Math.floor(shape(s)[1]*12)))];return`rgb(${c.map(v=>Math.round(v*k)).join(',')})`;};
 const skin=(f,a,b,shade,op)=>{let o='';const M=N*3;for(let i=Math.round(a*M);i<Math.round(b*M);i++){const s=i/M,e=(i+1)/M,m=(s+e)/2,c=col(m,shade(m));
   o+=`<path d="M${P(f(s,0))}L${P(f(e,0))}L${P(f(e,1))}L${P(f(s,1))}Z" fill="${c}"${op?'':` stroke="${c}" stroke-width=".8"`}/>`;}return op?`<g opacity="${op}" shape-rendering="crispEdges">${o}</g>`:o;};
 const wire=(f,a,b,step)=>{let d='';const i0=Math.round(a*N),i1=Math.round(b*N);
  for(let r=0;r<=4;r++){d+='M'+P(f(i0/N,r/4));for(let i=i0+1;i<=i1;i++){const q=f(i/N,r/4);if(step){const pr=f((i-1)/N,r/4);d+=`L${q[0].toFixed(1)} ${pr[1].toFixed(1)}`;}d+='L'+P(q);}}
  for(let i=i0;i<=i1;i++){d+='M'+P(f(i/N,0));for(let r=1;r<=4;r++)d+='L'+P(f(i/N,r/4));}
  return`<path d="${d}" fill="none" stroke="#000" stroke-width="${step?1.9:1.7}" stroke-opacity=".9" stroke-linejoin="round"/>`;};
 const shade=s=>{const g=(shape(Math.min(1,s+.002))[0]-shape(Math.max(0,s-.002))[0])/.004/1850;return Math.max(.55,Math.min(1,.9-.24*g-(s>.86?.12:0)*Math.max(0,g)));};
 const seg=(a,b)=>skin(def,a,b,shade)+wire(def,a,b);
 const tx=(x,y,s,w,f,t,b)=>`<text x="${x}" y="${y}" font-size="${s}" textLength="${w}" lengthAdjust="spacingAndGlyphs" fill="${f}" font-family="DejaVu Sans Mono" ${b?'font-weight="bold"':''}>${t}</text>`;
 const y=v=>((v*.6679-231)/1765).toFixed(4);
 return`<svg viewBox="825 231 3271 1765"><defs><linearGradient id="bg" x1="0" y1="0" x2="0" y2="1"><stop offset="0" stop-color="#1b2b46"/><stop offset="${y(1600)}" stop-color="#2c3d55"/><stop offset="${y(1900)}" stop-color="#31425a"/><stop offset="${y(2250)}" stop-color="#4e5e77"/><stop offset="${y(2560)}" stop-color="#728299"/><stop offset="${y(2820)}" stop-color="#8f9db5"/><stop offset="1" stop-color="#a0aec6"/></linearGradient></defs>
 <rect x="825" y="231" width="3271" height="1765" fill="url(#bg)"/>
 ${seg(0,.287)}${seg(.514,.739)}${seg(.953,1)}
 ${skin(flat,0,1,()=>.6,.5)}${wire(snap,0,1,1)}
 <path d="M1440 1306L1463 1305M1439 1341L1457 1326L1482 1328M1442 1294L1458 1310L1484 1306M1457 1326L1470 1342" stroke="#000" stroke-width="1.600" fill="none"/>
 ${seg(.287,.514)}${seg(.739,.953)}
 <g transform="translate(3807 253.8) scale(.2226)" stroke="#dccbff" stroke-width="17" stroke-linejoin="round" stroke-linecap="round">
 <path d="M440 270L455 245Q472 250 478 290L487 335L473 540Z" fill="#00005c" stroke-width="14"/>
 <path d="M445 330Q560 320 660 385Q755 450 762 530L473 540L487 335Z" fill="#125664"/><path d="M447 335L487 335L470 420Z" fill="#00005c" stroke="none"/><path d="M487 335L473 540" stroke-width="13"/>
 <path d="M350 612Q440 560 540 567Q700 590 716 700Q715 780 645 825L332 836Z" fill="#00005c"/>
 <path d="M432 290L467 545" fill="none"/><path d="M470 545L490 695" fill="none" stroke-width="13"/>
 <circle cx="426" cy="270" r="24" fill="#dccbff" stroke="none"/><rect x="454" y="683" width="77" height="77" fill="#c80000" stroke="none"/><rect x="484" y="702" width="28" height="30" fill="#dc0000" stroke="none"/></g>
 ${tx(3892,305.4,20.5,13,'#f5e400','Y')}${tx(3909,322.4,20,13,'#f5e400','Z')}${tx(3986,375.8,20.5,13,'#f5e400','X')}
 <g transform="translate(1028.6 1709.8) scale(.2226)">
 <path d="M219 282L262 325L300 400L215 445H185L157 410V390L185 345Z" fill="#00a000"/><path d="M219 282L262 325L245 348H185Z" fill="#00b000"/>
 <path d="M215 430H255V615H235L225 555L215 490Z" fill="#00d000"/>
 <path d="M244 445H310V470L300 475V590L272 636H244Z" fill="#0000b4"/><path d="M280 455H300V590L280 620Z" fill="#000090"/>
 <path d="M290 290H301L322 325L340 350L358 390V412L340 440L315 456H255L225 440L205 402L222 365L262 325Z" fill="#0000c0"/><path d="M322 325L358 390V412L340 440L315 456Q345 400 322 325Z" fill="#0000a0"/>
 <path d="M300 590H415V580H570V636H388V646H272V632Z" fill="#c40000"/><path d="M272 640L290 625H570V636H388V646H272Z" fill="#a00000"/>
 <path d="M570 530H590L620 542L735 602L598 675H578V580H570Z" fill="#a40000"/><path d="M600 590L735 602L598 675H578V620Z" fill="#8a0000"/></g>
 ${tx(1063,1757.7,27,18,'#fff','Y',1)}${tx(1086,1759.6,26,17.5,'#fff','Z',1)}${tx(1212,1849.6,27,19,'#fff','X',1)}
 </svg>`;});

define('step-dialog',`:host{position:absolute;left:392px;top:230px;width:978px;height:1095px;background:linear-gradient(90deg,#fff,#fbfbfb 20%,#eeeeee);border:2px solid #5b5d62;border-right-color:#444;box-shadow:0 8px 30px rgba(0,0,0,.5);display:flex;flex-direction:column}
.title{height:64px;background:#fff}.list{margin:8px 8px 0 9px;border:2px solid #a9acb5;background:#fff}.steps{height:220px}.frames{height:648px;display:flex;margin-top:0}
.lab{height:76px}.r{height:42.700px}.sel{background:#0078d7;color:#fff}.col{width:915px;padding:2.500px 0 0 1px}.hd{font-weight:bold;position:relative}
.vs{margin:2px 0 0 2px;width:33px;height:604px;background:#f0f0f0}.rows{height:606px}.hs{height:32px;width:914px;background:#f0f0f0}`,()=>{
 const base=(top,arr)=>arr.map(a=>TC(7,a[0],a[1],(top+30.2-227.1)/.3834,a[2],a[3]));
 const hd={css:'font-weight:bold'};
 const line=(x,y)=>box(x,y,2,42,'background:#e0e0e0');
 const V=[['36.036','51266.'],['69.790','1.92284E+05'],['224.81','1.99519E+06'],['225.92','2.01495E+06'],['470.05','8.72270E+06'],['624.98','1.54204E+07'],['800.11','2.52732E+07'],['1211.9','5.79819E+07'],['1212.2','5.80108E+07'],['1412.7','7.87898E+07'],['1676.9','1.11013E+08'],['1699.2','1.13990E+08']];
 let rows=`<div class="r">${row(base(0,[[42,63,'0'],[244,423,'Increment'],[484,700,'0: Base State']]),406,0)}</div>`;
 V.forEach((v,k)=>{const n=k+1,d=n>9?10:0;
  const a=n==1?[[42,60,'1'],[244,347,'Mode'],[438,606,'1: Value ='],[643,750,v[1]],[802,910,'Freq ='],[946,1055,v[0]],[1107,1335,'(cycles/time)']]
  :[[n>9?44:42,n>9?82:63,n],[244,347,'Mode'],[n>9?428:437,606+d,n+': Value ='],[631+d,848+d,v[1]],[859+d,967+d,'Freq ='],[1002+d,1112+d,v[0]],[1164+d,1391+d,'(cycles/time)']];
  rows+=`<div class="r${n==7?' sel':''}">${row(base(0,a),406,0)}</div>`;});
 const chev=(c,x0,y0,x1,y1,d)=>I(c,x0,y0,x1,y1,`<path d="${d}" fill="none" stroke="#555" stroke-width="4"/>`);
 const btn=(x0,x1,t0,t1,t)=>{const b=boxC(8,x0,1076,x1,1176,'background:#e1e1e1;box-shadow:inset 0 0 0 2px #adadad',[TC(8,t0,t1,1148,t)]);return b;};
 return`<div class="title">${row([logo(7,38,43,86,130),TC(7,107,309,113,'Step/Frame'),I(7,1468,58,1503,117,`<path d="M1469 59L1502 116M1502 59L1469 116" stroke="#111" stroke-width="2.200"/>`)],394,232)}</div>
 <div class="list steps"><div style="padding:1.500px 1px 0 1px"><div class="r">${row([...base(0,[[42,249,'Step Name',hd]]),line(800,0),...base(0,[[663,875,'Description',hd]]),line(1354,0)],406,0)}</div>
 ${[[42,138,'Static'],[42,156,'Step-3'],[44,227,'Frequency']].map((a,i)=>`<div class="r${i==2?' sel':''}">${row(base(0,[a]),406,0)}</div>`).join('')}</div></div>
 <div class="lab">${row([TC(7,30,146,922,'Frame',hd)],394,524)}</div>
 <div class="list frames"><div class="col"><div class="rows"><div class="r">${row([...base(0,[[44,149,'Index',hd]]),line(532.5,0),...base(0,[[245,457,'Description',hd]])],406,0)}</div>${rows}</div>
 <div class="hs">${row([chev(8,49,963,64,996,'M63 963L50 979L63 996'),box(442.3,1210.8,807,32.2,'background:#cdcdcd'),chev(8,1424,963,1441,996,'M1425 963L1439 979L1425 996')],406,1210.8)}</div></div>
 <div class="vs">${chev(7,1477,1020,1499,1049,'M1478 1049L1488 1024L1498 1049').html.replace('<svg','<svg style="margin:13px 0 0 9px"')}<div style="height:341px;margin-top:13px;background:#cdcdcd"></div>${chev(8,1477,885,1499,910,'M1478 885L1488 907L1498 885').html.replace('<svg','<svg style="margin:202px 0 0 9px"')}</div></div>
 ${row([btn(49,359,177,229,'OK'),btn(427,737,530,634,'Apply'),btn(805,1114,835,1084,'Field Output...'),btn(1182,1492,1276,1395,'Cancel')],394,1248)}`;});

define('cae-app',`:host{width:4096px;height:1996px;display:flex;flex-direction:column;position:relative;overflow:hidden}
.main{display:flex;height:1834px}.right{display:flex;flex-direction:column;width:3414px}.bar{display:flex;height:69px;padding-left:10px;flex:none}.work{display:flex}.top{flex:none}`,()=>
 `<title-bar class="top"></title-bar><menu-bar class="top"></menu-bar><tool-strip class="top"></tool-strip>
 <div class="main"><side-panel></side-panel><div class="right"><div class="bar"><context-bar></context-bar></div><div class="work"><tool-box></tool-box><view-port></view-port></div></div></div>
 <step-dialog></step-dialog>`);
</script>
</body>
</html>
